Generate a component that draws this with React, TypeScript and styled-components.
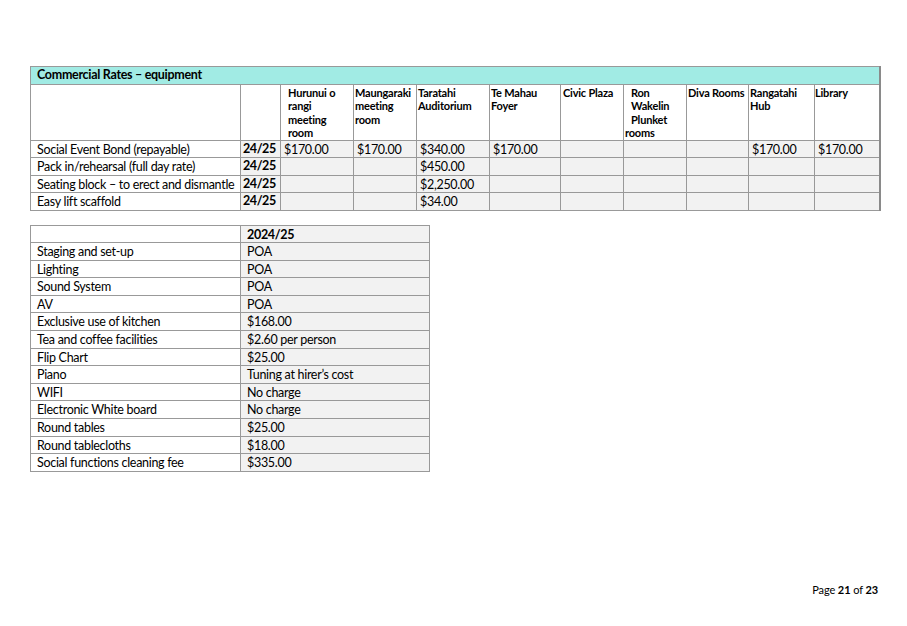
import styled, { createGlobalStyle } from "styled-components";

const GlobalStyle = createGlobalStyle`
  html, body {
    margin: 0;
    padding: 0;
    background: #ffffff;
  }
  body {
    font-family: Lato, "Open Sans", "Liberation Sans", sans-serif;
    color: #000000;
  }
`;

const venues = [
  ["Hurunui o", "rangi", "meeting", "room"],
  ["Maungaraki", "meeting", "room"],
  ["Taratahi", "Auditorium"],
  ["Te Mahau", "Foyer"],
  ["Civic Plaza"],
  ["Ron", "Wakelin", "Plunket", "rooms"],
  ["Diva Rooms"],
  ["Rangatahi", "Hub"],
  ["Library"],
];

// left padding of each venue heading, read off the reference
const headPads = [7, 1, 1, 1, 2, 7, 1, 1, 0];
const venueWidths = [73, 63, 73, 71, 63, 63, 62, 66, 65];

const equipmentRows = [
  { label: "Social Event Bond (repayable)", values: ["$170.00", "$170.00", "$340.00", "$170.00", "", "", "", "$170.00", "$170.00"] },
  { label: "Pack in/rehearsal (full day rate)", values: ["", "", "$450.00", "", "", "", "", "", ""] },
  { label: "Seating block \u2013 to erect and dismantle", values: ["", "", "$2,250.00", "", "", "", "", "", ""] },
  { label: "Easy lift scaffold", values: ["", "", "$34.00", "", "", "", "", "", ""] },
];

const extras = [
  ["Staging and set-up", "POA"],
  ["Lighting", "POA"],
  ["Sound System", "POA"],
  ["AV", "POA"],
  ["Exclusive use of kitchen", "$168.00"],
  ["Tea and coffee facilities", "$2.60 per person"],
  ["Flip Chart", "$25.00"],
  ["Piano", "Tuning at hirer\u2019s cost"],
  ["WIFI", "No charge"],
  ["Electronic White board", "No charge"],
  ["Round tables", "$25.00"],
  ["Round tablecloths", "$18.00"],
  ["Social functions cleaning fee", "$335.00"],
];

const App = () => {
  return (
    <>
      <GlobalStyle />
      <Page>
        <RatesTable>
          <colgroup>
            <col style={{ width: 210 }} />
            <col style={{ width: 40 }} />
            {venueWidths.map((w, i) => (
              <col key={i} style={{ width: w }} />
            ))}
          </colgroup>
          <tbody>
            <tr>
              <TitleCell colSpan={11}>Commercial Rates &ndash; equipment</TitleCell>
            </tr>
            <tr>
              <HeadCell />
              <HeadCell />
              {venues.map((lines, i) => (
                <HeadCell key={i} $pad={headPads[i]}>
                  {lines.map((line, j) => (
                    <HeadLine key={j} $outdent={i === 5 && j === 3}>
                      {line}
                    </HeadLine>
                  ))}
                </HeadCell>
              ))}
            </tr>
            {equipmentRows.map((row) => (
              <tr key={row.label}>
                <LabelCell>{row.label}</LabelCell>
                <YearCell>24/25</YearCell>
                {row.values.map((v, i) => (
                  <ValueCell key={i} $pad={3}>
                    {v}
                  </ValueCell>
                ))}
              </tr>
            ))}
          </tbody>
        </RatesTable>

        <ExtrasTable>
          <colgroup>
            <col style={{ width: 210 }} />
            <col style={{ width: 189 }} />
          </colgroup>
          <tbody>
            <tr>
              <LabelCell />
              <ValueCell $pad={6} $bold>
                2024/25
              </ValueCell>
            </tr>
            {extras.map(([label, value]) => (
              <tr key={label}>
                <LabelCell>{label}</LabelCell>
                <ValueCell $pad={6}>{value}</ValueCell>
              </tr>
            ))}
          </tbody>
        </ExtrasTable>

        <Footer>
          Page <b>21</b> of <b>23</b>
        </Footer>
      </Page>
    </>
  );
};

export default App;

const Page = styled.div`
  width: 907px;
  height: 626px;
  box-sizing: border-box;
  padding: 66px 28px 0 30px;
  display: flex;
  flex-direction: column;
  position: relative;
`;

const BaseTable = styled.table`
  border-collapse: collapse;
  table-layout: fixed;
  font-size: 12.5px;
  letter-spacing: -0.3px;

  td {
    border: 1px solid #999999;
    box-sizing: border-box;
    vertical-align: top;
    line-height: 15.5px;
    white-space: nowrap;
    overflow: hidden;
  }

  tr {
    height: 17.5px;
  }
`;

const RatesTable = styled(BaseTable)`
  width: 849px;
  border-right: 2px solid #8a8a8a;
`;

const ExtrasTable = styled(BaseTable)`
  width: 399px;
  margin-top: 14px;

  tr {
    height: 17.6px;
  }
`;

const TitleCell = styled.td`
  background: #a1ebe4;
  font-weight: 700;
  padding: 0 6px;
  height: 17px;
`;

const HeadCell = styled.td<{ $pad?: number }>`
  height: 56px;
  background: #ffffff;
  font-weight: 700;
  font-size: 11px;
  letter-spacing: -0.2px;
  padding: 1px 1px 0 ${({ $pad }) => $pad ?? 1}px;
  && {
    line-height: 13.5px;
  }
`;

const HeadLine = styled.div<{ $outdent?: boolean }>`
  margin-left: ${({ $outdent }) => ($outdent ? "-6px" : "0")};
`;

const LabelCell = styled.td`
  background: #ffffff;
  padding: 1px 4px 0 6px;
`;

const YearCell = styled.td`
  background: #f2f2f2;
  font-weight: 700;
  font-size: 12.5px;
  letter-spacing: -0.4px;
  padding: 0 1px 0 2px;
`;

const ValueCell = styled.td<{ $pad?: number; $bold?: boolean }>`
  background: #f2f2f2;
  padding: 1px 2px 0 ${({ $pad }) => $pad ?? 3}px;
  font-weight: ${({ $bold }) => ($bold ? 700 : 400)};
`;

const Footer = styled.div`
  position: absolute;
  right: 29px;
  top: 583px;
  font-size: 11px;
  letter-spacing: -0.1px;
`;
